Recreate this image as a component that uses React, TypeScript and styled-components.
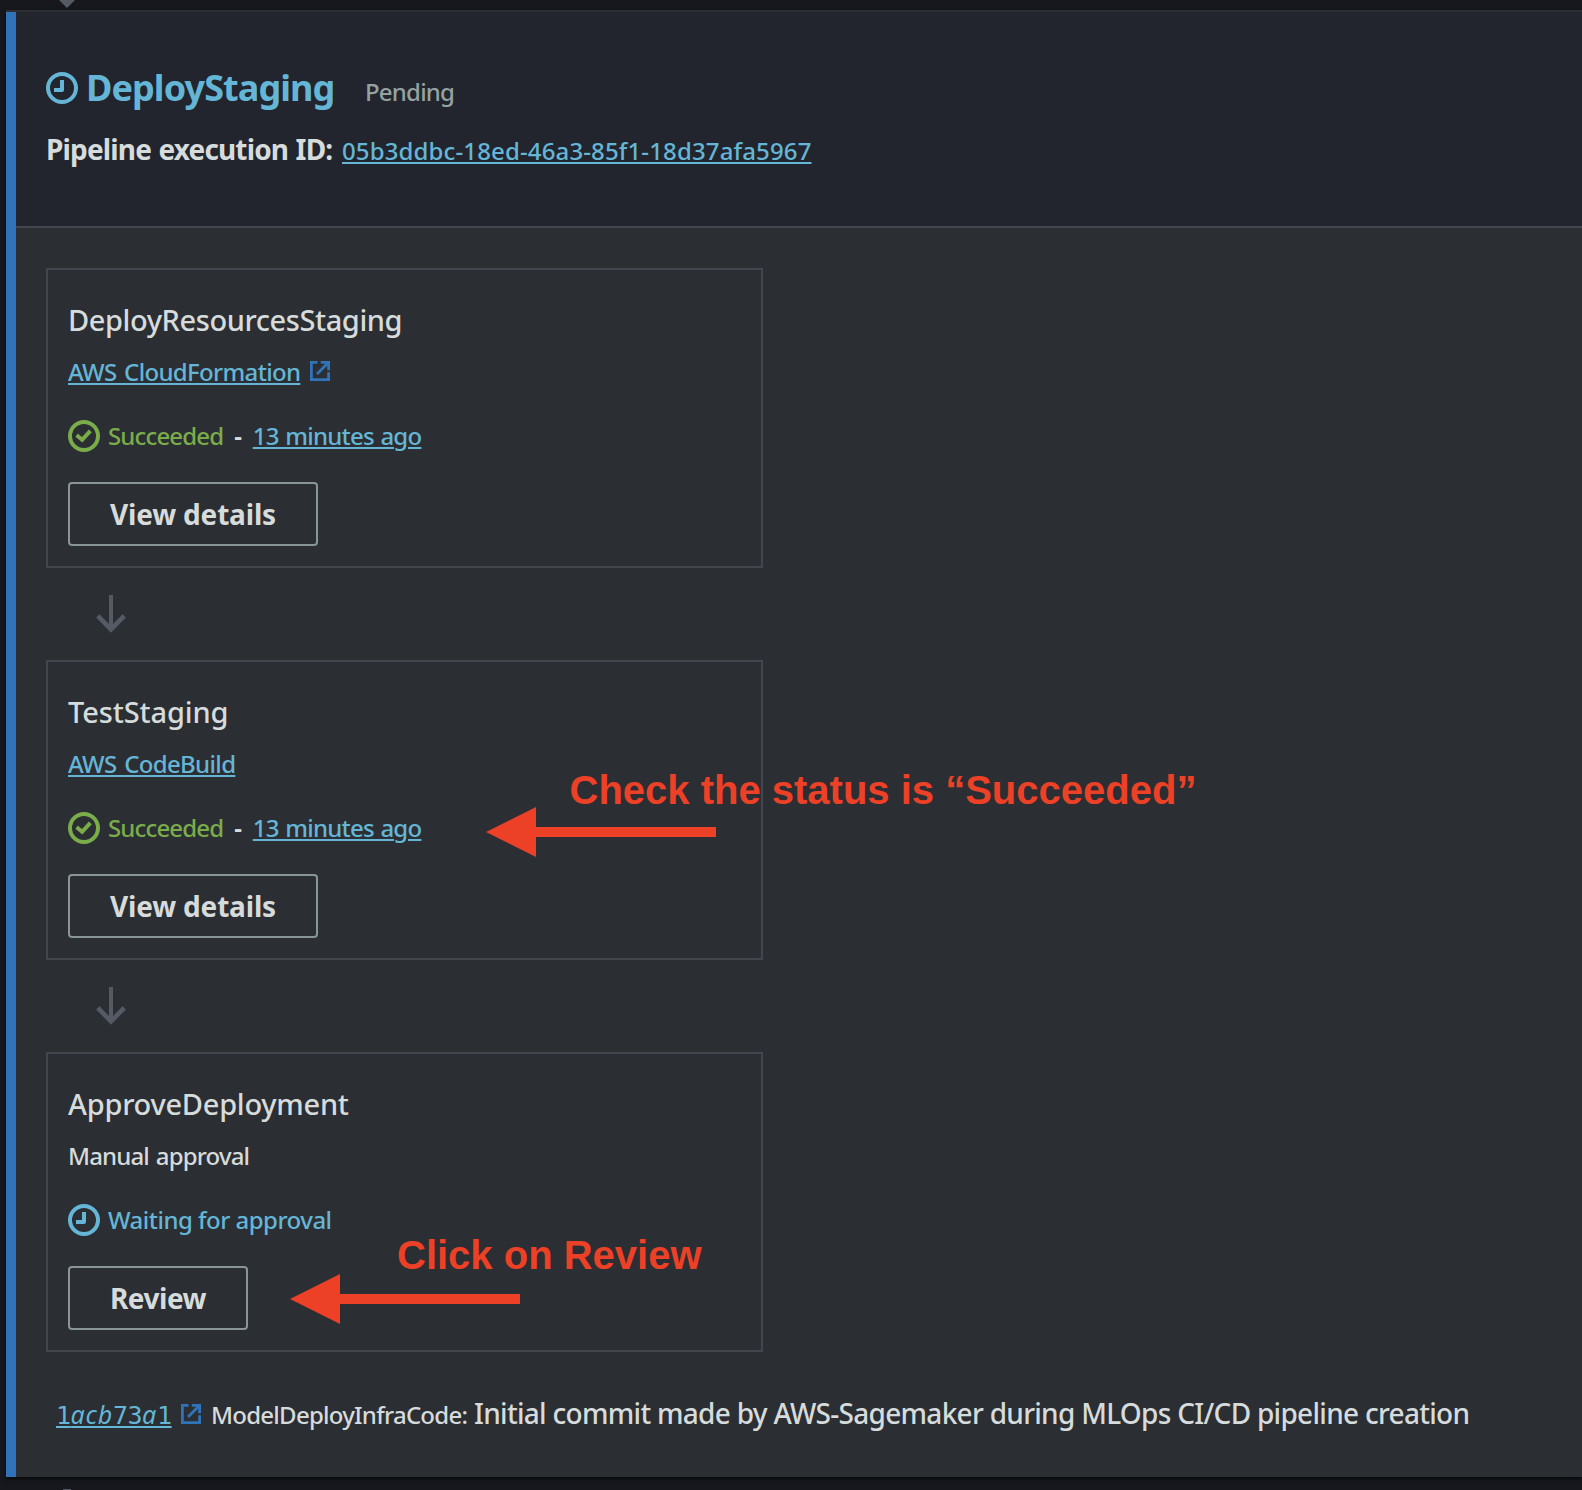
import React from "react";
import styled, { createGlobalStyle } from "styled-components";

const color = {
  page: "#17181d",
  header: "#22252d",
  panel: "#2b2e33",
  line: "#42464f",
  text: "#d6dbdb",
  muted: "#95a2a2",
  link: "#65b6d6",
  accent: "#3073b8",
  success: "#7aad4a",
  arrow: "#555b64",
  note: "#ec4126",
};

const GlobalStyle = createGlobalStyle`
  * { box-sizing: border-box; }
  body { margin: 0; background: ${color.page}; overflow: hidden; }
`;

const Screen = styled.div`
  position: relative;
  display: flex;
  flex-direction: column;
  width: 1582px;
  height: 1490px;
  overflow: hidden;
  background: ${color.page};
  color: ${color.text};
  font-family: "Noto Sans", "Open Sans", sans-serif;
  font-size: 24px;
  font-weight: 500;
  line-height: 31px;
  white-space: nowrap;
`;

const Connector = styled.div<{ $height: number }>`
  display: flex;
  flex: none;
  height: ${(p) => p.$height}px;
  padding-left: 59px;
  align-items: ${(p) => (p.$height > 10 ? "flex-end" : "flex-start")};
  svg { display: block; }
`;

const Stage = styled.section`
  display: flex;
  flex-direction: column;
  flex: none;
  height: 1467px;
  margin-left: 6px;
  border-top: 2px solid #2c2e33;
  background: ${color.panel};
  box-shadow: 0 2px 4px rgba(0, 0, 0, 0.7);
`;

const StageInner = styled.div`
  flex: 1;
  border-left: 10px solid ${color.accent};
`;

const StageHeader = styled.header`
  height: 216px;
  padding: 51px 30px 0;
  background: ${color.header};
  border-bottom: 2px solid ${color.line};
`;

const TitleRow = styled.div`
  display: flex;
  align-items: baseline;
  height: 50px;
`;

const TitleIcon = styled.span`
  display: flex;
  align-self: flex-start;
  margin: 9px 8px 0 0;
`;

const StageTitle = styled.h1`
  margin: 0;
  width: 279px;
  color: ${color.link};
  font-size: 36px;
  font-weight: 700;
  line-height: 50px;
  letter-spacing: -0.92px;
`;

const StageState = styled.span`
  color: ${color.muted};
  letter-spacing: -0.8px;
`;

const ExecutionRow = styled.div`
  display: flex;
  align-items: baseline;
  margin-top: 17px;
`;

const ExecutionLabel = styled.span`
  width: 296px;
  font-size: 28px;
  font-weight: 700;
  line-height: 38px;
  letter-spacing: -0.85px;
  word-spacing: 1px;
`;

const Link = styled.a<{ $spacing?: number; $words?: number }>`
  color: ${color.link};
  letter-spacing: ${(p) => p.$spacing ?? 0}px;
  word-spacing: ${(p) => p.$words ?? 0}px;
  text-decoration: underline;
  text-decoration-thickness: 2px;
  text-underline-offset: 2px;
`;

const StageBody = styled.div`
  display: flex;
  flex-direction: column;
  padding: 40px 30px 0;
`;

const Card = styled.article`
  width: 717px;
  height: 300px;
  padding: 30px 20px 20px;
  border: 2px solid ${color.line};
`;

const CardTitle = styled.h2<{ $spacing: number }>`
  margin: 0;
  font-size: 29px;
  font-weight: 500;
  line-height: 39px;
  letter-spacing: ${(p) => p.$spacing}px;
`;

const ProviderRow = styled.div`
  display: flex;
  align-items: baseline;
  gap: 10px;
  height: 31px;
  margin-top: 17px;
`;

const Provider = styled.span`
  letter-spacing: -0.85px;
  word-spacing: 1.5px;
`;

const StatusRow = styled.div`
  display: flex;
  align-items: flex-start;
  height: 32px;
  margin-top: 33px;
  svg { margin-right: 8px; }
`;

const StatusText = styled.span<{ $color: string; $spacing: number }>`
  color: ${(p) => p.$color};
  letter-spacing: ${(p) => p.$spacing}px;
`;

const Dash = styled.span`
  width: 29.5px;
  font-weight: 700;
  text-align: center;
`;

const Button = styled.button`
  display: block;
  height: 64px;
  margin-top: 30px;
  padding: 0 40px;
  border: 2px solid #879596;
  border-radius: 4px;
  background: transparent;
  color: ${color.text};
  font: 700 28px/60px "Noto Sans", "Open Sans", sans-serif;
`;

const ButtonLabel = styled.span<{ $spacing: number }>`
  letter-spacing: ${(p) => p.$spacing}px;
`;

const Step = styled.div`
  height: 92px;
  padding: 27px 0 27px 50px;
  svg { display: block; }
`;

const Revision = styled.footer`
  display: flex;
  align-items: baseline;
  margin-top: 42px;
  padding-left: 10px;
  line-height: 38px;
`;

const CommitLink = styled(Link)`
  width: 115px;
  margin-right: 10px;
  font-family: "DejaVu Sans Mono", monospace;
  font-size: 25px;
  font-weight: 400;
  letter-spacing: -0.5px;
  i {
    font-family: "Noto Sans", sans-serif;
    letter-spacing: 0.8px;
  }
`;

const Source = styled.span`
  width: 263px;
  margin-left: 10px;
  letter-spacing: -0.75px;
`;

const Message = styled.span`
  font-size: 28px;
  letter-spacing: -0.71px;
`;

const NoteText = styled.div<{ $x: number; $y: number }>`
  position: absolute;
  left: ${(p) => p.$x}px;
  top: ${(p) => p.$y}px;
  color: ${color.note};
  font: 700 40px/46px "Liberation Sans", Arial, sans-serif;
`;

const NoteArrow = styled.svg<{ $x: number; $y: number }>`
  position: absolute;
  left: ${(p) => p.$x}px;
  top: ${(p) => p.$y}px;
`;

function StatusIcon({ kind }: { kind: "pending" | "success" }) {
  return (
    <svg width="32" height="32" viewBox="0 0 16 16" fill="none" strokeWidth="2"
      strokeLinejoin={kind === "success" ? "miter" : "round"} strokeLinecap="square"
      stroke={kind === "success" ? color.success : color.link}>
      <circle cx="8" cy="8" r="7" />
      <path d={kind === "success" ? "M5.1 8.2L7.1 9.9L10.5 6.2" : "M8 5v4H5"} />
    </svg>
  );
}

function ExternalIcon() {
  return (
    <svg width="20" height="20" viewBox="0 0 20 20" fill="none" stroke={color.accent} strokeWidth="2.8">
      <path d="M7.5 1.4H1.4V18.6H18.6V11.3" />
      <path d="M10.8 1.4H18.6V9.2" />
      <path d="M18.5 1.5L7 13" />
    </svg>
  );
}

function StepArrow() {
  return (
    <Step>
      <svg width="30" height="38" viewBox="0 0 30 38" fill="none" stroke={color.arrow}>
        <path d="M15 0V34" strokeWidth="4" />
        <path d="M1.8 20.8L15 34.4L28.2 20.8" strokeWidth="4.6" />
      </svg>
    </Step>
  );
}

function PointerArrow({ x, y }: { x: number; y: number }) {
  return (
    <NoteArrow $x={x} $y={y} width="230" height="50" viewBox="0 0 230 50" fill={color.note}>
      <path d="M0 25L50 0V20H230V30H50V50Z" />
    </NoteArrow>
  );
}

function Succeeded() {
  return (
    <StatusRow>
      <StatusIcon kind="success" />
      <StatusText $color={color.success} $spacing={-0.85}>Succeeded</StatusText>
      <Dash>-</Dash>
      <Link $spacing={-0.75} $words={1}>13 minutes ago</Link>
    </StatusRow>
  );
}

export default function App() {
  return (
    <Screen>
      <GlobalStyle />
      <Connector $height={10}>
        <svg width="16" height="8" viewBox="0 0 16 8" fill={color.arrow}>
          <path d="M0 0H16L8 8Z" />
        </svg>
      </Connector>
      <Stage>
        <StageInner>
          <StageHeader>
            <TitleRow>
              <TitleIcon><StatusIcon kind="pending" /></TitleIcon>
              <StageTitle>DeployStaging</StageTitle>
              <StageState>Pending</StageState>
            </TitleRow>
            <ExecutionRow>
              <ExecutionLabel>Pipeline execution ID:</ExecutionLabel>
              <Link $spacing={0.13}>05b3ddbc-18ed-46a3-85f1-18d37afa5967</Link>
            </ExecutionRow>
          </StageHeader>
          <StageBody>
            <Card>
              <CardTitle $spacing={-0.42}>DeployResourcesStaging</CardTitle>
              <ProviderRow>
                <Link $spacing={-0.67} $words={2}>AWS CloudFormation</Link>
                <ExternalIcon />
              </ProviderRow>
              <Succeeded />
              <Button><ButtonLabel $spacing={-0.18}>View details</ButtonLabel></Button>
            </Card>
            <StepArrow />
            <Card>
              <CardTitle $spacing={-0.12}>TestStaging</CardTitle>
              <ProviderRow>
                <Link $spacing={-0.66} $words={2}>AWS CodeBuild</Link>
              </ProviderRow>
              <Succeeded />
              <Button><ButtonLabel $spacing={-0.18}>View details</ButtonLabel></Button>
            </Card>
            <StepArrow />
            <Card>
              <CardTitle $spacing={-0.27}>ApproveDeployment</CardTitle>
              <ProviderRow>
                <Provider>Manual approval</Provider>
              </ProviderRow>
              <StatusRow>
                <StatusIcon kind="pending" />
                <StatusText $color={color.link} $spacing={-0.52}>Waiting for approval</StatusText>
              </StatusRow>
              <Button><ButtonLabel $spacing={-0.5}>Review</ButtonLabel></Button>
            </Card>
            <Revision>
              <CommitLink>1<i>acb</i>73<i>a</i>1</CommitLink>
              <ExternalIcon />
              <Source>ModelDeployInfraCode:</Source>
              <Message>Initial commit made by AWS-Sagemaker during MLOps CI/CD pipeline creation</Message>
            </Revision>
          </StageBody>
        </StageInner>
      </Stage>
      <Connector $height={13}>
        <svg width="16" height="1" viewBox="0 0 16 1" fill={color.arrow}>
          <path d="M4 0H12V1H4Z" />
        </svg>
      </Connector>

      <NoteText $x={569.5} $y={767}>Check the status is “Succeeded”</NoteText>
      <PointerArrow x={486} y={807} />
      <NoteText $x={397} $y={1232}>Click on Review</NoteText>
      <PointerArrow x={290} y={1274} />
    </Screen>
  );
}
